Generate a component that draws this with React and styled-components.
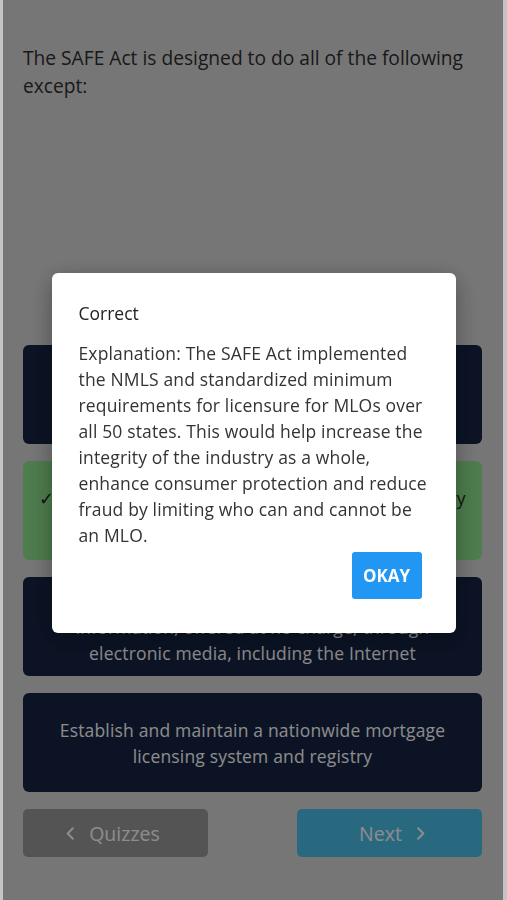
import React, { useState } from 'react';
import styled, { createGlobalStyle } from 'styled-components';

const GlobalStyle = createGlobalStyle`
  html, body {
    margin: 0;
    padding: 0;
    background: #c4c4c4;
  }
  * { box-sizing: border-box; }
`;

const Page = styled.div`
  display: flex;
  flex-direction: column;
  height: 100vh;
  margin: 0 4px 0 3px;
  padding: 44px 21px 43px 20px;   /* frame edges take 3px / 4px */
  background-color: #d8d8d8;
  font-family: "Open Sans", "Noto Sans", Arial, sans-serif;
`;

const Question = styled.p`
  margin: 0;
  font-size: 19.2px;
  line-height: 28px;
  color: #2e2e2e;
`;

const Spacer = styled.div`
  flex: 1;
`;

const Options = styled.div`
  display: flex;
  flex-direction: column;
  gap: 17px;
`;

const OptionCard = styled.div`
  display: flex;
  align-items: center;
  justify-content: center;
  height: 99px;
  padding: 0 12px;
  border-radius: 6px;
  background-color: ${(p) => (p.$correct ? '#8fe48f' : '#152443')};
  color: ${(p) => (p.$correct ? '#1a2a1a' : '#ffffff')};
  font-size: 17.5px;
  letter-spacing: 0.17px;
  line-height: 26px;
  text-align: center;
`;

const Check = styled.span`
  margin-right: 10px;
`;

const NavRow = styled.div`
  display: flex;
  justify-content: space-between;
  margin-top: 17px;
`;

const NavButton = styled.button`
  display: flex;
  align-items: center;
  justify-content: center;
  gap: 11px;
  width: 185px;
  height: 48px;
  padding: ${(p) => (p.$primary ? '0 0 0 8px' : '0 8px 0 0')};
  border: none;
  border-radius: 5px;
  background-color: ${(p) => (p.$primary ? '#4cc0e8' : '#999999')};
  color: #ffffff;
  font-family: inherit;
  font-size: 19.5px;
  cursor: pointer;

  svg {
    width: 15px;
    height: 15px;
  }
`;

const Overlay = styled.div`
  position: fixed;
  top: 0;
  bottom: 0;
  left: 3px;
  right: 4px;
  display: flex;
  align-items: center;
  justify-content: center;
  background-color: rgba(0, 0, 0, 0.45);
`;

const Modal = styled.div`
  width: 404px;
  margin: 6px 0 0 1px;
  padding: 27px 25px 34px 27px;
  border-radius: 6px;
  background-color: #ffffff;
  box-shadow: 0 6px 24px rgba(0, 0, 0, 0.35);
  font-family: "Open Sans", "Noto Sans", Arial, sans-serif;
`;

const ModalTitle = styled.h2`
  margin: 0 0 14px;
  font-size: 17.5px;
  font-weight: 400;
  line-height: 26px;
  color: #222;
`;

const ModalText = styled.p`
  margin: 0;
  font-size: 17.5px;
  letter-spacing: 0.15px;
  line-height: 26px;
  color: #333;
`;

const ModalFooter = styled.div`
  display: flex;
  justify-content: flex-end;
  margin-top: 4px;
  padding-right: 9px;
`;

const OkayButton = styled.button`
  width: 70px;
  height: 47px;
  border: none;
  border-radius: 3px;
  background-color: #2196f3;
  color: #ffffff;
  font-family: inherit;
  font-size: 17px;
  font-weight: 700;
  cursor: pointer;
`;

const Chevron = ({ dir }) => (
  <svg viewBox="0 0 16 16" fill="none" stroke="currentColor" strokeWidth="2.2" strokeLinecap="round" strokeLinejoin="round">
    {dir === 'left' ? <path d="M10.5 2.5 5 8l5.5 5.5" /> : <path d="M5.5 2.5 11 8l-5.5 5.5" />}
  </svg>
);

const options = [
  { text: 'Provide increased accountability and tracking of mortgage loan originators' },
  { text: 'Set interest rate limits across the whole industry for all residential mortgage loans', correct: true },
  { text: 'Provide consumers with easily accessible information, offered at no charge, through electronic media, including the Internet' },
  { text: 'Establish and maintain a nationwide mortgage licensing system and registry' },
];

function App() {
  const [open, setOpen] = useState(true);

  return (
    <>
      <GlobalStyle />
      <Page>
        <Question>The SAFE Act is designed to do all of the following except:</Question>
        <Spacer />
        <Options>
          {options.map((o, i) => (
            <OptionCard key={i} $correct={o.correct}>
              <span>
                {o.correct && <Check>✓</Check>}
                {o.text}
              </span>
            </OptionCard>
          ))}
        </Options>
        <NavRow>
          <NavButton>
            <Chevron dir="left" />
            Quizzes
          </NavButton>
          <NavButton $primary>
            Next
            <Chevron dir="right" />
          </NavButton>
        </NavRow>
      </Page>

      {open && (
        <Overlay>
          <Modal>
            <ModalTitle>Correct</ModalTitle>
            <ModalText>
              Explanation: The SAFE Act implemented the NMLS and standardized minimum requirements for
              licensure for MLOs over all 50 states. This would help increase the integrity of the industry
              as a whole, enhance consumer protection and reduce fraud by limiting who can and cannot be an MLO.
            </ModalText>
            <ModalFooter>
              <OkayButton onClick={() => setOpen(false)}>OKAY</OkayButton>
            </ModalFooter>
          </Modal>
        </Overlay>
      )}
    </>
  );
}

export default App;
